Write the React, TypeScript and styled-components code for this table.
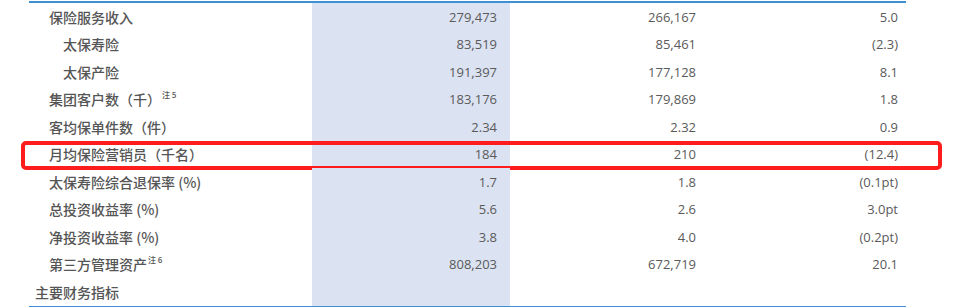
import styled, { createGlobalStyle } from "styled-components";

type Row = {
  label: string;
  note?: string;
  level: 0 | 1 | 2;
  current: string;
  previous: string;
  change: string;
  marked?: boolean;
};

const rows: Row[] = [
  { label: "保险服务收入", level: 1, current: "279,473", previous: "266,167", change: "5.0" },
  { label: "太保寿险", level: 2, current: "83,519", previous: "85,461", change: "(2.3)" },
  { label: "太保产险", level: 2, current: "191,397", previous: "177,128", change: "8.1" },
  { label: "集团客户数（千）", note: "注 5", level: 1, current: "183,176", previous: "179,869", change: "1.8" },
  { label: "客均保单件数（件）", level: 1, current: "2.34", previous: "2.32", change: "0.9" },
  { label: "月均保险营销员（千名）", level: 1, current: "184", previous: "210", change: "(12.4)", marked: true },
  { label: "太保寿险综合退保率 (%)", level: 1, current: "1.7", previous: "1.8", change: "(0.1pt)" },
  { label: "总投资收益率 (%)", level: 1, current: "5.6", previous: "2.6", change: "3.0pt" },
  { label: "净投资收益率 (%)", level: 1, current: "3.8", previous: "4.0", change: "(0.2pt)" },
  { label: "第三方管理资产", note: "注 6", level: 1, current: "808,203", previous: "672,719", change: "20.1" },
  { label: "主要财务指标", level: 0, current: "", previous: "", change: "" },
];

export default function App() {
  return (
    <>
      <GlobalStyle />
      <Table>
        {rows.map((row) => (
          <TableRow key={row.label} $marked={row.marked}>
            <Label $level={row.level}>
              {row.label}
              {row.note && <Note>{row.note}</Note>}
            </Label>
            <Value $shaded $pad={13}>{row.current}</Value>
            <Value $pad={14}>{row.previous}</Value>
            <Value $pad={8}>{row.change}</Value>
          </TableRow>
        ))}
      </Table>
    </>
  );
}

/** styles */

const GlobalStyle = createGlobalStyle`
  body {
    margin: 0;
    background: #ffffff;
  }
`;

const Table = styled.div`
  width: 877px;
  margin: 1px 0 0 29px;
  border-top: 2px solid #3f8fd4;
  border-bottom: 2px solid #3f8fd4;
`;

const TableRow = styled.div<{ $marked?: boolean }>`
  position: relative;
  display: grid;
  grid-template-columns: 283px 198px 200px 196px;
  height: 27.5px;

  ${({ $marked }) =>
    $marked &&
    `
    &::after {
      content: "";
      position: absolute;
      left: -8px;
      right: -36px;
      top: 0;
      bottom: -2px;
      border: 4px solid #ff1c1c;
      border-radius: 5px;
      pointer-events: none;
    }
  `}
`;

const levelPad = [6, 20, 34];

const Label = styled.div<{ $level: 0 | 1 | 2 }>`
  display: flex;
  align-items: center;
  padding-left: ${({ $level }) => levelPad[$level]}px;
  font-family: "Noto Sans CJK SC", "Noto Sans", sans-serif;
  font-size: 14px;
  font-weight: 500;
  color: #555555;
  white-space: nowrap;
`;

const Note = styled.sup`
  align-self: flex-start;
  margin-top: 5px;
  margin-left: 1px;
  font-size: 8px;
  line-height: 1;
  vertical-align: top;
`;

const Value = styled.div<{ $shaded?: boolean; $pad: number }>`
  display: flex;
  align-items: center;
  justify-content: flex-end;
  padding-right: ${({ $pad }) => $pad}px;
  background: ${({ $shaded }) => ($shaded ? "#dbe2f1" : "transparent")};
  font-family: "Open Sans", "Liberation Sans", sans-serif;
  font-size: 13px;
  color: #5a5a5a;
`;
